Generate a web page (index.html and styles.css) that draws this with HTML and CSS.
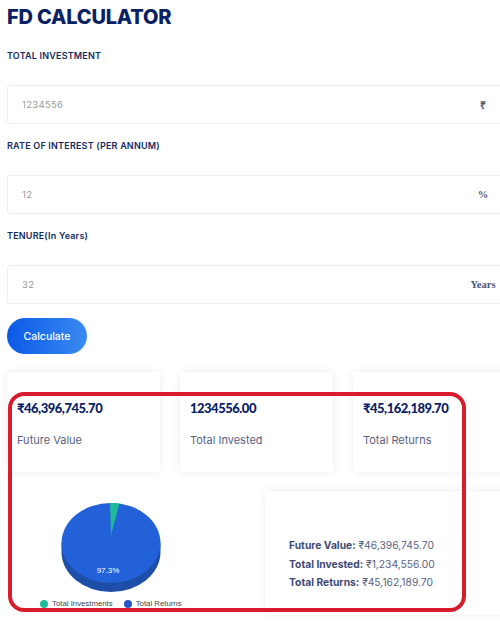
FILE: index.html
```html
<!DOCTYPE html>
<html lang="en">
<head>
    <meta charset="UTF-8">
    <meta name="viewport" content="width=device-width, initial-scale=1.0">
    <title>FD Calculator</title>
    <link rel="stylesheet" href="styles.css">
</head>
<body>
    <div class="container">
        <h1 class="title">FD CALCULATOR</h1>

        <label class="field-label">TOTAL INVESTMENT</label>
        <div class="field">
            <span class="field-value">1234556</span>
            <span class="field-unit">₹</span>
        </div>

        <label class="field-label">RATE OF INTEREST (PER ANNUM)</label>
        <div class="field">
            <span class="field-value">12</span>
            <span class="field-unit">%</span>
        </div>

        <label class="field-label">TENURE(In Years)</label>
        <div class="field">
            <span class="field-value">32</span>
            <span class="field-unit">Years</span>
        </div>

        <button class="btn-calc">Calculate</button>

        <div class="cards">
            <div class="card">
                <div class="card-amount">₹46,396,745.70</div>
                <div class="card-name">Future Value</div>
            </div>
            <div class="card">
                <div class="card-amount">1234556.00</div>
                <div class="card-name">Total Invested</div>
            </div>
            <div class="card card-last">
                <div class="card-amount">₹45,162,189.70</div>
                <div class="card-name">Total Returns</div>
            </div>
        </div>

        <div class="results">
            <div class="chart">
                <svg class="pie" width="100" height="90" viewBox="0 0 100 90">
                    <path d="M0.5 40 V49 A49.5 40 0 0 0 99.5 49 V40 Z" fill="#1d4fa8"/>
                    <ellipse cx="50" cy="40" rx="49.5" ry="40" fill="#2361d8"/>
                    <path d="M50 32 L49 0.1 A49.5 40 0 0 1 58.5 0.6 Z" fill="#1fb89a"/>
                    <text x="47" y="70" class="pie-label" text-anchor="middle">97.3%</text>
                </svg>
                <div class="legend">
                    <span class="legend-item"><i class="dot dot-green"></i>Total Investments</span>
                    <span class="legend-item"><i class="dot dot-blue"></i>Total Returns</span>
                </div>
            </div>
            <div class="summary">
                <p><b>Future Value:</b> ₹46,396,745.70</p>
                <p><b>Total Invested:</b> ₹1,234,556.00</p>
                <p><b>Total Returns:</b> ₹45,162,189.70</p>
            </div>
        </div>

        <div class="highlight"></div>
    </div>
</body>
</html>
```
FILE: styles.css
```css
html, body {
    margin: 0;
    padding: 0;
    background: #fff;
}
.container {
    position: relative;
    width: 500px;
    height: 622px;
    padding-left: 7px;
    box-sizing: border-box;
    overflow: hidden;
    font-family: "Inter", "Open Sans", sans-serif;
    color: #0b2266;
}
.title {
    margin: 0;
    padding-top: 4px;
    height: 41px;
    box-sizing: border-box;
    font-size: 20px;
    line-height: 26px;
    font-weight: 800;
    letter-spacing: -0.2px;
    color: #0a2163;
}
.field-label {
    display: block;
    height: 44px;
    padding-top: 8px;
    box-sizing: border-box;
    font-size: 9px;
    line-height: 14px;
    font-weight: 600;
    letter-spacing: 0.2px;
    color: #14295f;
}
.field {
    display: flex;
    justify-content: space-between;
    align-items: center;
    width: 500px;
    height: 39px;
    margin-bottom: 7px;
    padding-left: 14px;
    box-sizing: border-box;
    border: 1px solid #eeeef0;
    border-radius: 3px;
}
.field-value {
    font-size: 9.5px;
    color: #9a9a9a;
    letter-spacing: 0.3px;
}
.field-unit {
    width: 46px;
    text-align: center;
    font-family: "Liberation Serif", serif;
    font-size: 10.5px;
    font-weight: 700;
    color: #4c5577;
}
.btn-calc {
    display: block;
    width: 80px;
    height: 36px;
    margin-top: 14px;
    border: 0;
    border-radius: 18px;
    background: linear-gradient(90deg, #0b58e8, #3a8cf0);
    color: #fff;
    font-family: "Inter", sans-serif;
    font-size: 10.5px;
    font-weight: 500;
}
.cards {
    display: flex;
    gap: 20px;
    margin-top: 18px;
}
.card {
    flex: none;
    width: 153px;
    height: 100px;
    padding: 28px 0 0 10px;
    box-sizing: border-box;
    box-shadow: 0 0 8px rgba(30, 40, 80, 0.09);
}
.card-last {
    width: 200px;
}
.card-amount {
    font-family: "Lato", "Inter", sans-serif;
    font-size: 13px;
    line-height: 16px;
    font-weight: 900;
    letter-spacing: -0.5px;
    color: #0a2163;
}
.card-name {
    margin-top: 17px;
    font-size: 11px;
    line-height: 14px;
    color: #59627f;
}
.results {
    display: flex;
    margin-top: 19px;
}
.chart {
    flex: none;
    width: 258px;
    padding-top: 12px;
    box-sizing: border-box;
}
.pie {
    display: block;
    margin-left: 54px;
}
.pie-label {
    font-family: "Liberation Sans", sans-serif;
    font-size: 8px;
    fill: #fff;
}
.legend {
    display: flex;
    gap: 11px;
    margin: 6px 0 0 33px;
    font-family: "Liberation Sans", sans-serif;
    font-size: 7.8px;
    line-height: 10px;
    color: #444;
}
.legend-item {
    display: flex;
    align-items: center;
    gap: 4px;
}
.dot {
    width: 8px;
    height: 8px;
    border-radius: 50%;
}
.dot-green {
    background: #1fb89a;
}
.dot-blue {
    background: #2a55c8;
}
.summary {
    flex: none;
    width: 260px;
    height: 124px;
    padding: 45px 0 0 24px;
    box-sizing: border-box;
    box-shadow: 0 0 8px rgba(30, 40, 80, 0.09);
}
.summary p {
    margin: 0;
    font-size: 10.3px;
    line-height: 18.7px;
    color: #59627f;
}
.summary b {
    font-weight: 700;
    color: #3f4a75;
}
.highlight {
    position: absolute;
    left: 8px;
    top: 392px;
    width: 458px;
    height: 220px;
    box-sizing: border-box;
    border: 4px solid #d81c2b;
    border-radius: 16px;
}
```
